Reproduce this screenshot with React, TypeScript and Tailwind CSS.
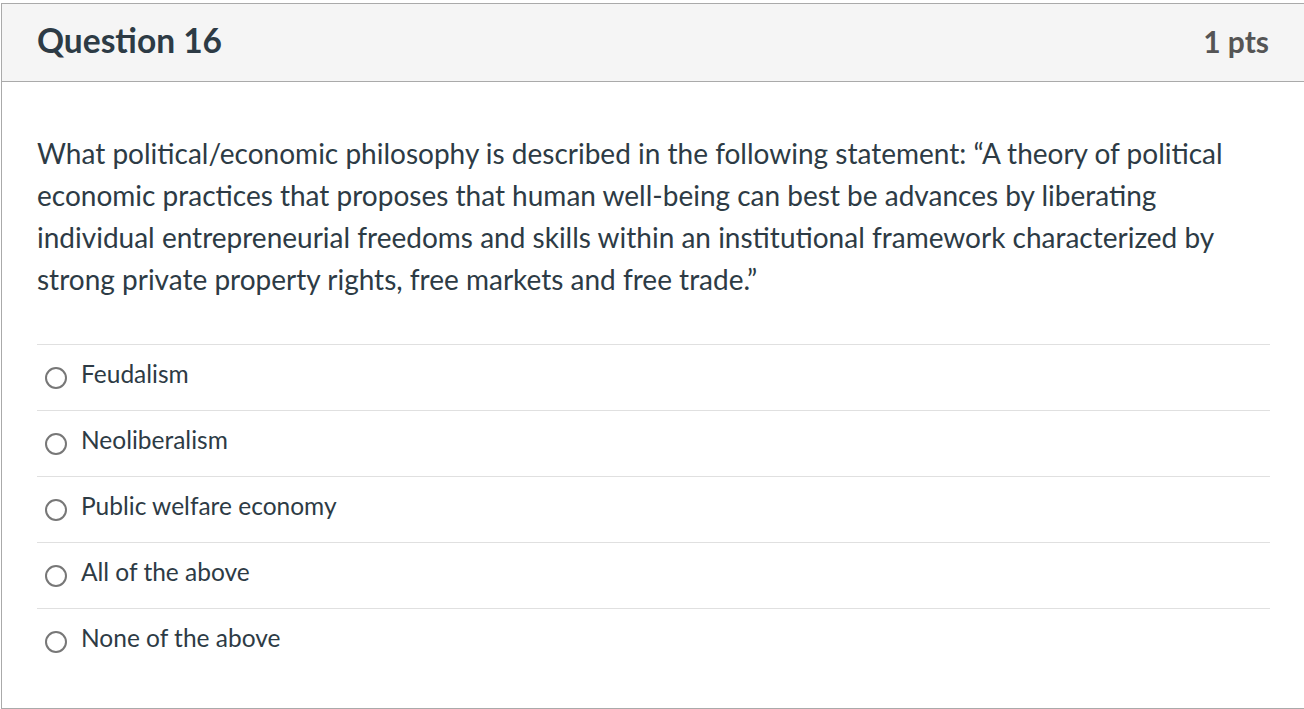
const ANSWERS = [
  "Feudalism",
  "Neoliberalism",
  "Public welfare economy",
  "All of the above",
  "None of the above",
];

function Radio() {
  return <span className="block h-[22px] w-[22px] shrink-0 rounded-full border-2 border-[#777777] bg-white" />;
}

export default function App() {
  return (
    <div className="h-[709px] w-[1304px] overflow-hidden bg-white pt-[3px] pl-px font-['Lato',sans-serif] text-[#2d3b45]">
      <div className="w-[1310px] border border-[#aaaaaa] border-r-0">
        {/* header */}
        <div className="flex h-[78px] w-[1303px] items-center justify-between border-b border-[#aaaaaa] bg-[#f5f5f5] pb-[4px] pl-[35px] pr-[36px]">
          <h2 className="text-[33.5px] font-bold leading-none">Question 16</h2>
          <span className="text-[30px] font-bold leading-none text-[#555555]">1 pts</span>
        </div>

        <div className="w-[1303px] pl-[35px] pr-[35px] pt-[50px] pb-[34px]">
          <p className="text-[28px] leading-[42px]">
            What political/economic philosophy is described in the following statement: “A theory of political
            economic practices that proposes that human well-being can best be advances by liberating
            individual entrepreneurial freedoms and skills within an institutional framework characterized by
            strong private property rights, free markets and free trade.”
          </p>

          <div className="mt-[44px]">
            {ANSWERS.map((a) => (
              <div key={a} className="flex h-[66px] items-center gap-[14px] border-t border-[#e0e0e0] pl-2">
                <Radio />
                <span className="mb-[7px] text-[24.5px]">{a}</span>
              </div>
            ))}
          </div>
        </div>
      </div>
    </div>
  );
}
